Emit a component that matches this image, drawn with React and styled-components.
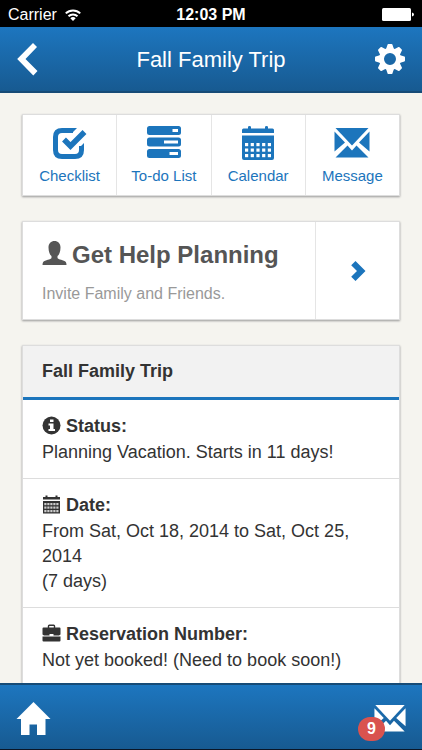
import React from 'react'
import styled, { createGlobalStyle } from 'styled-components';

const GlobalStyle = createGlobalStyle`
  * {
    box-sizing: border-box;
  }

  body {
    margin: 0;
    background-color: #f5f4ef;
    color: #333;
    font-family: "Liberation Sans", Arial, sans-serif;
    font-size: 18px;
    line-height: 25px;
  }

  h1, h2, h3, p, dl, dt, dd {
    margin: 0;
  }
`

const Page = styled.div`
  display: flex;
  flex-direction: column;
  height: 100vh;
`

const StatusBar = styled.div`
  display: grid;
  grid-template-columns: 1fr auto 1fr;
  align-items: center;
  flex: none;
  height: 27px;
  padding: 2px 8px 0;
  background-color: #000;
  color: #fff;
  font-size: 16px;
`

const Carrier = styled.div`
  display: flex;
  align-items: center;
  gap: 8px;
`

const Clock = styled.time`
  font-weight: bold;
`

const Battery = styled.svg`
  justify-self: end;
`

const Bar = styled.div`
  display: flex;
  align-items: center;
  justify-content: space-between;
  flex: none;
  height: 66px;
  padding: 0 16px;
  background-image: linear-gradient(#1d76bf, #175a91);
  color: #fff;
`

const Header = styled(Bar).attrs({ as: 'header' })`
  border-bottom: 2px solid #164b77;
`

const Footer = styled(Bar).attrs({ as: 'nav' })`
  height: 67px;
  padding-top: 2px;
  border-top: 2px solid #164b77;
  border-bottom: 1px solid #0a1526;
`

const Title = styled.h1`
  font-size: 22px;
  font-weight: normal;
`

const IconButton = styled.button`
  display: flex;
  position: relative;
  min-width: 32px;
  padding: 0;
  border: 0;
  background: none;
  color: inherit;
  cursor: pointer;
`

const HomeLink = styled.a`
  display: flex;
  color: inherit;
`

const Badge = styled.span`
  position: absolute;
  left: -16px;
  bottom: -9px;
  width: 27px;
  height: 24px;
  border-radius: 12px;
  background-color: #d9534f;
  font-family: "Liberation Sans", Arial, sans-serif;
  font-size: 16px;
  font-weight: bold;
  line-height: 24px;
  text-align: center;
`

const Content = styled.main`
  display: flex;
  flex-direction: column;
  flex: 1;
  gap: 25px;
  min-height: 0;
  padding: 21px 22px 0;
  overflow-y: auto;
  scrollbar-width: none;
`

const Card = styled.section`
  display: flex;
  flex: none;
  border: 1px solid #ddd;
  background-color: #fff;
  box-shadow: 0 1px 2px #999;
`

const Shortcut = styled.a`
  display: flex;
  flex: 1;
  flex-direction: column;
  align-items: center;
  gap: 4px;
  padding: 10px 0 8px;
  color: #1c75bc;
  font-size: 15px;
  line-height: 22px;
  text-decoration: none;

  & + & {
    border-left: 1px solid #e5e5e5;
  }
`

const Help = styled.div`
  flex: 1;
  padding: 18px 19px 13px;
`

const HelpTitle = styled.h2`
  display: flex;
  align-items: center;
  gap: 5px;
  color: #555;
  font-size: 24px;
  line-height: 30px;

  svg {
    margin-bottom: 4px;
  }
`

const HelpText = styled.p`
  margin-top: 11px;
  color: #999;
  font-size: 16px;
`

const HelpButton = styled.button`
  display: flex;
  align-items: center;
  justify-content: center;
  width: 84px;
  padding: 0;
  border: 0;
  border-left: 1px solid #e5e5e5;
  background: none;
  color: #1c75bc;
  cursor: pointer;
`

const Panel = styled(Card)`
  flex-direction: column;
`

const PanelTitle = styled.h2`
  padding: 13px 19px;
  border-bottom: 3px solid #1c75bc;
  background-color: #f2f2f2;
  font-size: 18px;
`

const Row = styled.div`
  padding: 13px 19px;
  border-bottom: 1px solid #ddd;
`

const Label = styled.dt`
  display: flex;
  align-items: center;
  gap: 5px;
  font-weight: bold;
  line-height: 27px;

  svg {
    margin-bottom: 3px;
  }
`

const Icon = ({ width, height, children }) => (
  <svg width={width} height={height} viewBox={`0 0 ${width} ${height}`} fill="currentColor" aria-hidden="true">
    {children}
  </svg>
)

const WifiIcon = () => (
  <Icon width={16} height={12}>
    <g fill="none" stroke="currentColor" strokeWidth="2">
      <path d="M0.8 4.4a10.2 10.2 0 0 1 14.4 0" />
      <path d="M3.5 7.3a6.4 6.4 0 0 1 9 0" />
    </g>
    <path d="M8 12 5.3 9.3a3.8 3.8 0 0 1 5.4 0z" />
  </Icon>
)

const BackIcon = () => (
  <Icon width={22} height={34}>
    <path d="M17 1 21 5 9.500 17 21.500 29 17.300 33.500 1.200 17z" />
  </Icon>
)

const teeth = [0, 45, 90, 135, 180, 225, 270, 315]

const GearIcon = () => (
  <Icon width={32} height={32}>
    <circle cx="16" cy="16" r="8.500" fill="none" stroke="currentColor" strokeWidth="5" />
    {teeth.map((angle) => (
      <path key={angle} d="M11.900 6.500 13.600 1.600Q13.800 1 14.400 1H17.600Q18.200 1 18.400 1.600L20.100 6.500z" transform={`rotate(${angle} 16 16)`} />
    ))}
  </Icon>
)

const ChecklistIcon = () => (
  <Icon width={36} height={34}>
    <path d="M21 4.500H10Q3.500 4.500 3.500 11V24Q3.500 30.500 10 30.500H23Q29.500 30.500 29.500 24V20" fill="none" stroke="currentColor" strokeWidth="5" />
    <path d="M20 2H25L20 7zM32 17V22H27z" />
    <path d="M12 14 18.500 20.500 32 7" fill="none" stroke="#fff" strokeWidth="9" />
    <path d="M12 13.500 18.500 20 32.500 6" fill="none" stroke="currentColor" strokeWidth="5.500" />
  </Icon>
)

const TodoIcon = () => (
  <Icon width={36} height={34}>
    <rect x="1" y="0" width="34" height="9" rx="2.500" />
    <rect x="1" y="11.500" width="34" height="9" rx="2.500" />
    <rect x="1" y="23" width="34" height="9" rx="2.500" />
    <path d="M26.500 3H32V6H26.500zM18 14.500H32V17.500H18zM23.500 26H32V29H23.500z" fill="#fff" />
  </Icon>
)

const days = [0, 1, 2, 3, 4]

const CalendarIcon = () => (
  <Icon width={36} height={36}>
    <path d="M2 8V5Q2 3.500 3.500 3.500H8V2Q8 1 9.500 1T11 2V3.500H25V2Q25 1 26.500 1T28 2V3.500H32.500Q34 3.500 34 5V8z" />
    <path d="M2 10.500H34V33Q34 35 32 35H4Q2 35 2 33z" />
    {[18, 23.5, 29].map((y) => days.map((day) => (
      <rect key={`${y}-${day}`} x={5 + day * 5.7} y={y} width="3.200" height="3.200" fill="#fff" />
    )))}
  </Icon>
)

const MailIcon = ({ width, height }) => (
  <svg width={width} height={height} viewBox="0 0 36 30" preserveAspectRatio="none" fill="currentColor" aria-hidden="true">
    <path d="M1.500 0H34.500L18 17.500z" />
    <path d="M0.500 3.500 11 14.500 0.500 23.500zM35.500 3.500V23.500L25 14.500z" />
    <path d="M1.500 29.500 13.500 17.500 18 22.500 22.500 17.500 34.500 29.500z" />
  </svg>
)

const UserIcon = () => (
  <Icon width={25} height={26}>
    <path d="M12.500 1C9 1 6.500 3.500 6.500 7.500 6.500 12 8 15 9.500 16V18C9 19.500 3 20 1.200 22Q0.500 23 0.500 25H24.500Q24.500 23 23.800 22C22 20 16 19.500 15.500 18V16C17 15 18.500 12 18.500 7.500 18.500 3.500 16 1 12.500 1z" />
  </Icon>
)

const NextIcon = () => (
  <Icon width={16} height={22}>
    <path d="M5.500 1 15.500 11 5.500 21 1.200 16.700 7 11 1.200 5.300z" />
  </Icon>
)

const InfoIcon = () => (
  <Icon width={19} height={19}>
    <circle cx="9.500" cy="9.500" r="9" />
    <path d="M8 3.500H11.500V6H8zM6.500 7.500H11.500V13H13V15H6.500V13H8V9.500H6.500z" fill="#fff" />
  </Icon>
)

const DateIcon = () => (
  <Icon width={19} height={19}>
    <path d="M1 4.500V2H3.500V0.500H5.500V2H13.500V0.500H15.500V2H18V4.500zM1 6H18V18.500H1z" />
    {[8, 11.5, 15].map((y) => days.map((day) => (
      <rect key={`${y}-${day}`} x={2.3 + day * 3} y={y} width="2.200" height="2.200" fill="#ccc" />
    )))}
  </Icon>
)

const BriefcaseIcon = () => (
  <Icon width={19} height={18}>
    <path d="M6.500 4V2Q6.500 1.200 7.300 1.200H11.700Q12.500 1.200 12.500 2V4" fill="none" stroke="currentColor" strokeWidth="1.400" />
    <path d="M1.500 3.500H17.500Q18.500 3.500 18.500 4.500V10.500L17 11.500H11.500V10H7.500V11.500H2L0.500 10.500V4.500Q0.500 3.500 1.500 3.500z" />
    <path d="M0.500 12.500H18.500V16.500Q18.500 17.500 17.500 17.500H1.500Q0.500 17.500 0.500 16.500z" />
  </Icon>
)

const HomeIcon = () => (
  <Icon width={35} height={34}>
    <path d="M17.500 1 34.500 18H29.500V34H21V23.500H13.500V34H5V18H0.500z" />
  </Icon>
)

const shortcuts = [
  { label: 'Checklist', icon: <ChecklistIcon /> },
  { label: 'To-do List', icon: <TodoIcon /> },
  { label: 'Calendar', icon: <CalendarIcon /> },
  { label: 'Message', icon: <MailIcon width={36} height={30} /> },
]

const ShortcutIcon = styled.span`
  display: flex;
  align-items: center;
  height: 36px;
`

const details = [
  { label: 'Status:', icon: <InfoIcon />, lines: ['Planning Vacation. Starts in 11 days!'] },
  { label: 'Date:', icon: <DateIcon />, lines: ['From Sat, Oct 18, 2014 to Sat, Oct 25, 2014', '(7 days)'] },
  { label: 'Reservation Number:', icon: <BriefcaseIcon />, lines: ['Not yet booked! (Need to book soon!)'] },
]

const App = () => {
  return (
    <Page>
      <GlobalStyle />
      <StatusBar>
        <Carrier>Carrier <WifiIcon /></Carrier>
        <Clock>12:03 PM</Clock>
        <Battery width="32" height="13" viewBox="0 0 32 13" fill="#fff" aria-hidden="true">
          <rect width="29" height="13" rx="1.500" />
          <path d="M30 4.500Q32 5 32 6.500T30 8.500z" />
        </Battery>
      </StatusBar>

      <Header>
        <IconButton aria-label="Back"><BackIcon /></IconButton>
        <Title>Fall Family Trip</Title>
        <IconButton aria-label="Settings"><GearIcon /></IconButton>
      </Header>

      <Content>
        <Card as="nav">
          {shortcuts.map(({ label, icon }) => (
            <Shortcut key={label} href="#">
              <ShortcutIcon>{icon}</ShortcutIcon>
              {label}
            </Shortcut>
          ))}
        </Card>

        <Card>
          <Help>
            <HelpTitle><UserIcon />Get Help Planning</HelpTitle>
            <HelpText>Invite Family and Friends.</HelpText>
          </Help>
          <HelpButton aria-label="Invite"><NextIcon /></HelpButton>
        </Card>

        <Panel>
          <PanelTitle>Fall Family Trip</PanelTitle>
          <dl>
            {details.map(({ label, icon, lines }) => (
              <Row key={label}>
                <Label>{icon}{label}</Label>
                {lines.map((line) => <dd key={line}>{line}</dd>)}
              </Row>
            ))}
          </dl>
        </Panel>
      </Content>

      <Footer>
        <HomeLink href="#" aria-label="Home"><HomeIcon /></HomeLink>
        <IconButton aria-label="Messages, 9 unread">
          <MailIcon width={32} height={27} />
          <Badge>9</Badge>
        </IconButton>
      </Footer>
    </Page>
  )
}

export default App
